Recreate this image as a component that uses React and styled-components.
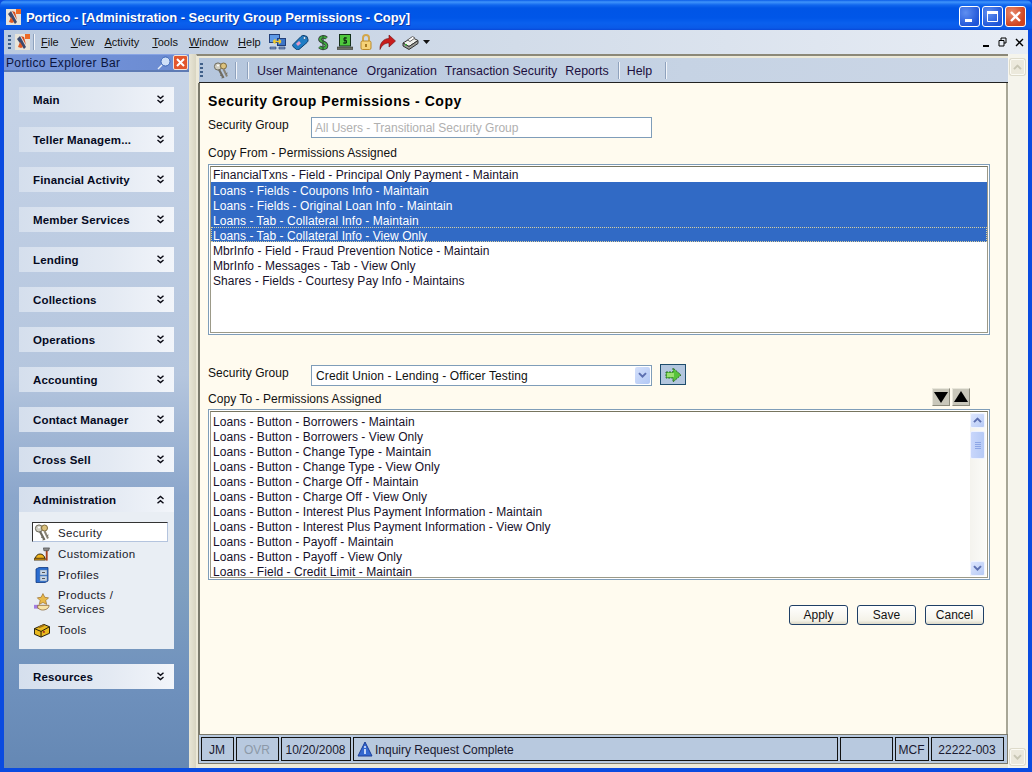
import React from "react";
import styled, { createGlobalStyle } from "styled-components";

const Global = createGlobalStyle`
  html, body { margin: 0; padding: 0; background: #0050e0; }
  * { box-sizing: border-box; }
  body { font-family: "Liberation Sans", Arial, sans-serif; font-size: 12px; color: #111; }
`;

const Win = styled.div`
  width: 1032px; height: 772px; overflow: hidden; display: flex; flex-direction: column;
  background: #0a4be0; padding: 0 4px 4px 4px;
`;
const TitleBar = styled.div`
  height: 30px; margin: 0 -4px; padding: 0 6px 0 6px; display: flex; align-items: center;
  border-radius: 6px 6px 0 0;
  background: linear-gradient(180deg,#0a5ce8 0,#3f94fb 2px,#1167ee 5px,#0055e6 8px,#0056e8 18px,#0a60ee 23px,#0a5ae8 28px,#0848d8 30px);
`;
const Title = styled.div`
  flex: 1; margin-left: 5px; color: #fff; font-weight: bold; font-size: 13px; letter-spacing: -.05px;
  white-space: nowrap; margin-top: 4px; text-shadow: 1px 1px 0 #0a3aa8;
`;
const TitleLogo = styled.div` display: flex; margin-top: 3px; `;
const CapBtn = styled.div`
  width: 21px; height: 21px; margin-left: 2px; margin-top: 2px; border: 1px solid #fff; border-radius: 3px;
  display: flex; align-items: center; justify-content: center;
  background: ${p => p.$close ? "radial-gradient(circle at 30% 30%,#e88a6c,#d0441f 70%)" : "radial-gradient(circle at 30% 30%,#5f8ff0,#1f55d8 75%)"};
`;
const MenuBar = styled.div`
  height: 24px; display: flex; align-items: center; padding-left: 4px;
  background: linear-gradient(90deg,#bccbe0 0,#d2dce9 50%,#e8edf5 100%);
`;
const Grip = styled.div`
  width: 3px; height: ${p => p.$h || 14}px; margin-right: ${p => p.$mr || 4}px;
  background: repeating-linear-gradient(180deg,#3f5f88 0 2px,transparent 2px 4px);
`;
const Sep = styled.div`
  width: 1px; height: ${p => p.$h || 16}px; background: #8fa2bd; box-shadow: 1px 0 0 #f2f5fa; margin: 0 0 0 ${p => p.$l || 0}px;
`;
const MenuItem = styled.span`
  font-size: 11px; margin-left: ${p => p.$ml}px; color: #111; display: inline-block;
  &::first-letter { text-decoration: underline; }
`;
const IconRow = styled.div`
  display: flex; gap: 6px; margin-left: 8px; align-items: center;
`;
const MdiBtns = styled.div`
  margin-left: auto; display: flex; gap: 8px; align-items: center; padding-right: 4px;
`;
const Main = styled.div` flex: 1; display: flex; min-height: 0; `;
const Explorer = styled.div`
  width: 185px; display: flex; flex-direction: column;
  background: linear-gradient(180deg,#c8d5e8 0,#b5c6de 45%,#8ba6cb 62%,#7f9fc0 75%,#6f91bd 88%,#6588b4 100%);
`;
const ExpHead = styled.div`
  height: 18px; display: flex; align-items: center; padding: 0 1px 0 2px; font-size: 12px; color: #0b1540;
  background: linear-gradient(90deg,#7593d8,#6f8fd6 60%,#6b8bd0); border-bottom: 2px solid #5e7bb4; border-top: 1px solid #88a4e4;
`;
const ExpTitle = styled.span` flex: 1; letter-spacing: .35px; `;
const CloseTag = styled.div`
  width: 15px; height: 15px; border: 1px solid #f2e3d6; background: #e2562c; border-radius: 2px;
  display: flex; align-items: center; justify-content: center; margin-left: 2px;
`;
const Groups = styled.div` padding: 15px 15px 0 15px; display: flex; flex-direction: column; gap: 15px; `;
const Group = styled.div` display: flex; flex-direction: column; `;
const GroupHead = styled.div`
  height: 25px; display: flex; align-items: center; justify-content: space-between; padding: 0 10px 0 14px;
  font-weight: bold; font-size: 11.5px; letter-spacing: .15px; color: #050a1e; white-space: nowrap;
  background: linear-gradient(90deg,#d5dfed 0,#e4eaf3 60%,#f2f5fa 100%);
`;
const GroupBody = styled.div`
  height: 137px; background: #e9eef4; padding: 10px 6px 0 13px; display: flex; flex-direction: column;
`;
const ExpItem = styled.div`
  display: flex; align-items: center; gap: 8px; flex: none; height: ${p => p.$h || 21}px; margin-top: ${p => p.$mt || 0}px; padding-left: 2px; line-height: 14px; font-size: 11.5px; letter-spacing: .35px; color: #1a1a2a;
  ${p => p.$active && `background:#fff;border:1px solid;border-color:#333 #b4c4de #b4c4de #333;padding:1px 0 0 1px;margin-bottom:1px;height:20px;`}
`;
const ItemIcon = styled.div` width: 16px; display: flex; justify-content: center; flex: none; `;
const Splitter = styled.div` width: 7px; background: linear-gradient(90deg,#e8e6d6,#d8d5c2); `;
const Right = styled.div`
  flex: 1; display: flex; flex-direction: column; padding: 2px 0 4px 1px; background: #ece9d8;
  border-top: 2px solid #8b8878; border-left: 1px solid #ece9d8; min-width: 0;
`;
const Tool = styled.div`
  height: 25px; display: flex; align-items: center; padding: 1px 0 0 1px; margin-left: 1px; border-bottom: 1px solid #222; flex: none;
  background: linear-gradient(90deg,#b5c6dd,#c6d3e4 60%,#cbd6e6);
`;
const ToolLink = styled.span` margin-left: ${p => p.$ml || 0}px; font-size: 12.4px; padding-top: 1px; color: #1c1040; white-space: nowrap; `;
const Content = styled.div`
  flex: 1; background: #fffbef; border-left: 2px solid #7b7a6c; border-right: 2px solid #a8a696; padding: 0 16px 0 8px; display: flex; flex-direction: column; min-height: 0;
`;
const Heading = styled.div`
  font-weight: bold; font-size: 14px; margin-top: 10px; height: 16px; line-height: 16px; color: #000; letter-spacing: .55px; white-space: nowrap;
`;
const Label = styled.div` height: 14px; line-height: 14px; font-size: 12px; letter-spacing: .05px; color: #111; margin-top: ${p => p.$mt || 0}px; `;
const FieldRow = styled.div`
  display: flex; align-items: flex-start; margin-top: ${p => p.$mt || 0}px;
`;
const FieldLabel = styled(Label)` width: 103px; margin-top: 1px; `;
const TextField = styled.div`
  width: 341px; height: 21px; border: 1px solid #7f9db9; background: #fff; color: #b0b0b0; padding: 3px 3px; font-size: 12px; line-height: 14px; white-space: nowrap;
`;
const SelectField = styled.div`
  width: 341px; height: 21px; border: 1px solid #7f9db9; background: #fff; padding: 3px 4px; font-size: 12px; letter-spacing: .12px; line-height: 14px; position: relative; color: #111;
`;
const SelectArrow = styled.div`
  position: absolute; right: 1px; top: 1px; width: 15px; height: 17px; background: linear-gradient(135deg,#d4e0fb,#b2c8f5); border-radius: 2px; display: flex; align-items: center; justify-content: center;
`;
const ListBox = styled.div`
  height: 171px; border: 1px solid #7f9db9; padding: 1px; background: #fff; position: relative; margin-top: ${p => p.$mt || 0}px; flex: none;
`;
const ListInner = styled.div`
  height: 100%; border: 1px solid #9c9a88; border-top-color: #77755f; padding: ${p => p.$pt || 0}px 0 0 0; overflow: hidden; display: flex; flex-direction: column;
`;
const SelBlock = styled.div` background: #316ac5; display: flex; flex-direction: column; flex: none; `;
const ListRow = styled.div`
  height: 15px; line-height: ${p => p.$tight ? 17 : 19}px; padding-left: 2px; font-size: 12px; letter-spacing: .06px; white-space: nowrap; flex: none;
  color: ${p => p.$sel ? "#fff" : "#16102a"};
  ${p => p.$focus && "outline: 1px dotted #d7cfa0; outline-offset: -1px;"}
`;
const VScroll = styled.div`
  position: absolute; right: 3px; top: 3px; bottom: 3px; width: 16px; background: linear-gradient(90deg,#f4f3ee,#fbfbf8);
  display: flex; flex-direction: column; justify-content: space-between;
`;
const ScrollBtn = styled.div`
  width: 15px; height: 15px; background: linear-gradient(135deg,#dde6fd,#b6caf6); border: 1px solid #f0f4ff; border-radius: 2px; display: flex; align-items: center; justify-content: center;
`;
const Thumb = styled.div`
  position: absolute; left: 0; top: 18px; width: 15px; height: 28px; background: linear-gradient(90deg,#c8d6fb,#b6caf6); border: 1px solid #eef2ff; border-radius: 2px;
  display: flex; flex-direction: column; gap: 1px; align-items: center; justify-content: center;
  & > i { display: block; width: 6px; height: 1px; background: #8da6e6; }
`;
const GoBtn = styled.div`
  width: 26px; height: 21px; margin-left: 8px; margin-top: -1px; background: #b3c6de; border: 1px solid #1f4d6c; display: flex; align-items: center; justify-content: center;
`;
const LabelRow = styled.div` display: flex; justify-content: space-between; align-items: flex-start; padding-right: 20px; height: 21px; margin-top: 2px; `;
const SortBtns = styled.div` display: flex; gap: 2px; `;
const SortBtn = styled.div`
  width: 18px; height: 18px; background: #c9c7ba; border: 1px solid #e8e6da; border-right-color: #8d8b7c; border-bottom-color: #8d8b7c; display: flex; align-items: center; justify-content: center;
`;
const CopyToLabel = styled(Label)` margin-top: 4px; `;
const Actions = styled.div` display: flex; justify-content: flex-end; gap: 9px; padding-right: 6px; margin-top: 25px; `;
const Btn = styled.div`
  width: 59px; height: 20px; border: 1px solid #1f3f66; border-radius: 3px; background: linear-gradient(180deg,#fff,#f4f2e8 80%,#dcd8c6); text-align: center; line-height: 19px; font-size: 12px; color: #111;
`;
const Status = styled.div`
  height: 30px; background: #b8c9df; border: 1px solid #7c7a6c; padding: 2px; display: flex; gap: 2px; align-items: stretch; flex: none;
`;
const Panel = styled.div`
  width: ${p => p.$w}px; border: 1px solid #111; display: flex; align-items: center; justify-content: ${p => p.$left ? "flex-start" : "center"}; gap: 2px; font-size: 12px; padding: 1px 1px 0 ${p => p.$left ? 3 : 0}px; color: ${p => p.$dim ? "#8c99a8" : "#1a1a30"}; white-space: nowrap;
`;
const WinScroll = styled.div`
  width: 20px; background: #f5f4ec; display: flex; flex-direction: column; justify-content: space-between; padding: 5px 4px 3px 1px; border-left: 1px solid #f8f7f0;
`;
const WinScrollBtn = styled.div`
  width: 15px; height: 16px; background: #ece9dc; border: 1px solid #fbfaf3; box-shadow: 0 0 0 1px #dedbcb; border-radius: 2px; display: flex; align-items: center; justify-content: center;
`;

const Chev = ({ up }) => (
  <svg width="7" height="9" viewBox="0 0 7 9" fill="none" stroke="#0a0a14" strokeWidth="1.4" style={up ? { transform: "scaleY(-1)" } : undefined}>
    <path d="M.5 .8l3 2.6 3-2.6M.5 5l3 2.600 3-2.600" />
  </svg>
);
const Caret = ({ up, color = "#5c6fb0", s = 9 }) => (
  <svg width={s} height={s * 0.7} viewBox="0 0 9 6" fill="none" stroke={color} strokeWidth="2" style={up ? { transform: "scaleY(-1)" } : undefined}>
    <path d="M1 1l3.500 3.500L8 1" />
  </svg>
);
const Keys = () => (
  <svg width="16" height="17" viewBox="0 0 16 17">
    <circle cx="5" cy="4.500" r="3.600" fill="#cfcdc0" stroke="#6d6a5c" />
    <circle cx="10.500" cy="4" r="3" fill="#dcc27e" stroke="#7d6a3c" />
    <circle cx="5" cy="3.500" r="1" fill="#fff" />
    <path d="M6 7.500l4.500 8.500" stroke="#6f6c62" strokeWidth="2.200" />
    <path d="M10.500 7l3.500 7.500" stroke="#8a8476" strokeWidth="2" />
    <path d="M9 12.500l-2 1M10.500 15l-2 1M13 12l1.500-1" stroke="#6f6c62" />
  </svg>
);
const AppLogo = () => (
  <svg width="15" height="16" viewBox="0 0 15 16">
    <rect width="15" height="16" fill="#e8e4da" />
    <rect x="10" width="5" height="5" fill="#ec6a26" />
    <path d="M2 5l3-3 6 11-2 2z" fill="#3c4a6e" />
    <path d="M3 13l2-5 3 5-2 1z" fill="#e05a24" />
    <path d="M6 2l3 1 2 8z" fill="#d84c1e" />
  </svg>
);
const MonitorIcon = () => (
  <svg width="17" height="16" viewBox="0 0 17 16">
    <rect x=".5" y=".5" width="10" height="8" fill="#5f9ae6" stroke="#23407a" />
    <rect x="8.500" y="4.500" width="8" height="7" fill="#3e76c8" stroke="#23407a" />
    <path d="M1 13h6v2H1zM10 13h6v2h-6z" fill="#7e93bb" stroke="#23407a" strokeWidth=".6" />
    <path d="M4 7.500h8M4 7.500l2.500-2M4 7.500l2.500 2M12 7.500l-2-2M12 7.500l-2 2" stroke="#f2c92c" strokeWidth="1.500" fill="none" />
  </svg>
);
const TagIcon = () => (
  <svg width="17" height="16" viewBox="0 0 17 16">
    <path d="M1 10.500L9 2.500a3 3 0 013-1l3 1 1 3a3 3 0 01-1 3L7 15.500a2 2 0 01-2.500 0l-3.500-3a1.500 1.500 0 010-2z" fill="#1f7cc4" stroke="#0d3f70" />
    <circle cx="12.500" cy="4" r="1.300" fill="#eaf4ff" stroke="#0d3f70" strokeWidth=".5" />
    <rect x="4.500" y="8" width="4" height="3" fill="#e29ac4" transform="rotate(-40 6.500 9.500)" />
  </svg>
);
const DollarIcon = () => (
  <svg width="16" height="17" viewBox="0 0 16 17">
    <path d="M11.500 4.200C9.500 2 5 2.800 5 5.500S11.500 8 11.500 11.500 6.500 15 4.500 12.800" fill="none" stroke="#36383a" strokeWidth="3.600" />
    <path d="M11.500 4.200C9.500 2 5 2.800 5 5.500S11.500 8 11.500 11.500 6.500 15 4.500 12.800" fill="none" stroke="#3fae3f" strokeWidth="2" />
    <path d="M8 1v15" stroke="#2c5a30" strokeWidth="1.300" />
  </svg>
);
const ScreenIcon = () => (
  <svg width="16" height="16" viewBox="0 0 16 16">
    <rect x="2.500" y=".5" width="11" height="11.500" fill="#4fc83e" stroke="#14301a" />
    <rect x="0" y="13" width="16" height="2.500" fill="#6a6e62" stroke="#222" strokeWidth=".5" />
    <path d="M10 4H7v2.500h2.500V9H6M8 3v7" stroke="#0e2a14" fill="none" />
  </svg>
);
const LockIcon = () => (
  <svg width="14" height="16" viewBox="0 0 14 16">
    <path d="M4 8V4a3 3 0 016 0v4" fill="none" stroke="#d2a64a" strokeWidth="2" />
    <rect x="2" y="7" width="10" height="8.500" rx="1.500" fill="#f5d277" stroke="#bb8a2a" />
    <rect x="6" y="10" width="2" height="3" fill="#a67a22" />
  </svg>
);
const RedArrow = () => (
  <svg width="17" height="16" viewBox="0 0 17 16"><path d="M1 15.500C.5 8.500 5 4.500 10 4.500V1l6.500 6-6.500 6V9C6 9 3 11 1 15.500z" fill="#c81c1c" stroke="#6d0f0f" strokeWidth=".6" /></svg>
);
const Printer = () => (
  <svg width="17" height="15" viewBox="0 0 17 15">
    <path d="M1 8l9-5.500 6 3-9 6z" fill="#f2f2ee" stroke="#333" />
    <path d="M1 8v3l6 3.500 9-6V5.500l-9 6z" fill="#9a9a94" stroke="#333" />
    <path d="M5.500 5l5-3.500L13 3 8 6.500z" fill="#fff" stroke="#666" />
    <rect x="3" y="9" width="2" height="1.500" fill="#3a3" />
  </svg>
);
const SmallCaret = () => <svg width="7" height="4" viewBox="0 0 7 4" style={{ marginLeft: -2 }}><path d="M0 0h7L3.500 4z" fill="#111" /></svg>;
const Helmet = () => (
  <svg width="17" height="16" viewBox="0 0 17 16">
    <path d="M1.500 13a5 5 0 0110 0z" fill="#f0b41c" stroke="#2e2208" />
    <path d="M0 12.500h12v2H0z" fill="#d89818" stroke="#2e2208" strokeWidth=".7" />
    <path d="M13.500 4v11" stroke="#a8421c" strokeWidth="2" />
    <path d="M10 1.500h6.500l-1 3h-5z" fill="#8a8a8a" stroke="#333" strokeWidth=".6" />
  </svg>
);
const Cabinet = () => (
  <svg width="14" height="16" viewBox="0 0 14 16">
    <path d="M1 2l3-1.500h9V14l-3 1.500H1z" fill="#2a6cd0" stroke="#123a80" strokeWidth=".8" />
    <rect x="5" y="3" width="7" height="5" fill="#c6d6e8" stroke="#6a86a8" strokeWidth=".5" />
    <rect x="5" y="9" width="7" height="5" fill="#c6d6e8" stroke="#6a86a8" strokeWidth=".5" />
    <rect x="7" y="5" width="3" height="1" fill="#555" /><rect x="7" y="11" width="3" height="1" fill="#555" />
  </svg>
);
const StarHand = () => (
  <svg width="17" height="19" viewBox="0 0 17 19">
    <path d="M9.500 0l2 4 4 .5-3 3 1 4-4-2-4 2 1-4-3-3 4-.5z" fill="#e8ba4c" stroke="#8a5a18" strokeWidth=".6" />
    <rect x="0" y="12" width="5" height="4" fill="#a27ce0" />
    <path d="M4 12.500h12c0 3-3 5-7 5-2 0-3-1-5-2z" fill="#f8e4a8" stroke="#7a5016" strokeWidth=".7" />
  </svg>
);
const ToolBox = () => (
  <svg width="17" height="15" viewBox="0 0 17 15">
    <path d="M.5 5.500l10-4.500 6 2.500v7l-9 4-7-3z" fill="#e9b91e" stroke="#1c1606" />
    <path d="M.5 5.500l7 3 9-5M7.500 8.500v6" stroke="#1c1606" fill="none" />
    <rect x="5" y="2" width="6" height="2" fill="#9c6c14" transform="rotate(-22 8 3)" />
    <rect x="9.500" y="8" width="2" height="2" fill="#b0381c" />
  </svg>
);
const GreenArrow = () => (
  <svg width="17" height="14" viewBox="0 0 17 14"><path d="M1 4h7V0l8 7-8 7v-4H1z" fill="#57c23a" stroke="#2d6a28" strokeDasharray="2 1" /><rect x="2" y="5" width="7" height="4" fill="#9be070" /></svg>
);
const Tri = ({ up }) => <svg width="14" height="12" viewBox="0 0 14 12" style={up ? undefined : { transform: "scaleY(-1)" }}><path d="M7 0l7 11H0z" fill="#000" /></svg>;
const Info = () => (
  <svg width="16" height="17" viewBox="0 0 16 17"><path d="M8 1l7 14H1z" fill="#3468d0" stroke="#1c3e98" /><circle cx="8" cy="6" r="1" fill="#e8f0ff" /><path d="M8 8v5" stroke="#e8f0ff" strokeWidth="1.600" /></svg>
);

const groupsTop = ["Main", "Teller Managem...", "Financial Activity", "Member Services", "Lending", "Collections", "Operations", "Accounting", "Contact Manager", "Cross Sell"];
const selectedRows = [
  "Loans - Fields - Coupons Info - Maintain",
  "Loans - Fields - Original Loan Info - Maintain",
  "Loans - Tab - Collateral Info - Maintain",
  "Loans - Tab - Collateral Info - View Only",
];
const afterRows = [
  "MbrInfo - Field - Fraud Prevention Notice - Maintain",
  "MbrInfo - Messages - Tab - View Only",
  "Shares - Fields - Courtesy Pay Info - Maintains",
];
const toRows = [
  "Loans - Button - Borrowers - Maintain",
  "Loans - Button - Borrowers - View Only",
  "Loans - Button - Change Type - Maintain",
  "Loans - Button - Change Type - View Only",
  "Loans - Button - Charge Off - Maintain",
  "Loans - Button - Charge Off - View Only",
  "Loans - Button - Interest Plus Payment Information - Maintain",
  "Loans - Button - Interest Plus Payment Information - View Only",
  "Loans - Button - Payoff - Maintain",
  "Loans - Button - Payoff - View Only",
  "Loans - Field - Credit Limit - Maintain",
];

export default function App() {
  return (
    <Win>
      <Global />
      <TitleBar>
        <TitleLogo><AppLogo /></TitleLogo>
        <Title>Portico - [Administration - Security Group Permissions - Copy]</Title>
        <CapBtn><svg width="13" height="13" viewBox="0 0 13 13"><rect x="2" y="9" width="7" height="3" fill="#fff" /></svg></CapBtn>
        <CapBtn><svg width="13" height="13" viewBox="0 0 13 13"><path d="M1.500 3.500h10v8h-10z" fill="none" stroke="#fff" /><rect x="1" y="1" width="11" height="3" fill="#fff" /></svg></CapBtn>
        <CapBtn $close><svg width="13" height="13" viewBox="0 0 13 13"><path d="M2 2l9 9M11 2l-9 9" stroke="#fff" strokeWidth="2.400" /></svg></CapBtn>
      </TitleBar>
      <MenuBar>
        <Grip />
        <AppLogo />
        <Sep $l={3} />
        <MenuItem $ml={7}>File</MenuItem>
        <MenuItem $ml={12}>View</MenuItem>
        <MenuItem $ml={10}>Activity</MenuItem>
        <MenuItem $ml={13}>Tools</MenuItem>
        <MenuItem $ml={11}>Window</MenuItem>
        <MenuItem $ml={10}>Help</MenuItem>
        <IconRow>
          <MonitorIcon /><TagIcon /><DollarIcon /><ScreenIcon /><LockIcon /><RedArrow /><Printer /><SmallCaret />
        </IconRow>
        <MdiBtns>
          <svg width="7" height="12" viewBox="0 0 7 12"><rect y="9" width="6" height="2" fill="#000" /></svg>
          <svg width="9" height="10" viewBox="0 0 9 10" fill="none" stroke="#000"><path d="M3 3V1h5v5H6M1 3.500h5v5.500H1z" /></svg>
          <svg width="9" height="9" viewBox="0 0 9 9"><path d="M1 1l7 7M8 1l-7 7" stroke="#000" strokeWidth="1.400" /></svg>
        </MdiBtns>
      </MenuBar>
      <Main>
        <Explorer>
          <ExpHead>
            <ExpTitle>Portico Explorer Bar</ExpTitle>
            <svg width="14" height="14" viewBox="0 0 14 14"><circle cx="8.500" cy="5.500" r="4.500" fill="#cfe0f8" stroke="#3a66b8" /><path d="M5 9l-4 4" stroke="#e8eef8" strokeWidth="1.400" /></svg>
            <CloseTag><svg width="9" height="9" viewBox="0 0 9 9"><path d="M1 1l7 7M8 1l-7 7" stroke="#fff" strokeWidth="2" /></svg></CloseTag>
          </ExpHead>
          <Groups>
            {groupsTop.map(g => (
              <GroupHead key={g}>{g}<Chev /></GroupHead>
            ))}
            <Group>
              <GroupHead>Administration<Chev up /></GroupHead>
              <GroupBody>
                <ExpItem $active><ItemIcon><Keys /></ItemIcon>Security</ExpItem>
                <ExpItem><ItemIcon><Helmet /></ItemIcon>Customization</ExpItem>
                <ExpItem><ItemIcon><Cabinet /></ItemIcon>Profiles</ExpItem>
                <ExpItem $h={28} $mt={3}><ItemIcon><StarHand /></ItemIcon><span>Products /<br />Services</span></ExpItem>
                <ExpItem $h={14} $mt={7}><ItemIcon><ToolBox /></ItemIcon>Tools</ExpItem>
              </GroupBody>
            </Group>
            <GroupHead>Resources<Chev /></GroupHead>
          </Groups>
        </Explorer>
        <Splitter />
        <Right>
          <Tool>
            <Grip $h={16} $mr={10} />
            <Keys />
            <Sep $h={17} $l={6} />
            <Sep $h={17} $l={11} />
            <ToolLink $ml={9}>User Maintenance</ToolLink>
            <ToolLink $ml={9}>Organization</ToolLink>
            <ToolLink $ml={8}>Transaction Security</ToolLink>
            <ToolLink $ml={8}>Reports</ToolLink>
            <Sep $h={17} $l={9} />
            <ToolLink $ml={8}>Help</ToolLink>
            <Sep $h={17} $l={13} />
          </Tool>
          <Content>
            <Heading>Security Group Permissions - Copy</Heading>
            <FieldRow $mt={8}>
              <FieldLabel>Security Group</FieldLabel>
              <TextField>All Users - Transitional Security Group</TextField>
            </FieldRow>
            <Label $mt={8}>Copy From - Permissions Assigned</Label>
            <ListBox $mt={4}>
              <ListInner>
                <ListRow $tight>FinancialTxns - Field - Principal Only Payment - Maintain</ListRow>
                <SelBlock>
                  {selectedRows.map((t, i) => <ListRow key={t} $sel $focus={i === selectedRows.length - 1}>{t}</ListRow>)}
                </SelBlock>
                {afterRows.map(t => <ListRow key={t}>{t}</ListRow>)}
              </ListInner>
            </ListBox>
            <FieldRow $mt={30}>
              <FieldLabel>Security Group</FieldLabel>
              <SelectField>Credit Union - Lending - Officer Testing<SelectArrow><Caret /></SelectArrow></SelectField>
              <GoBtn><GreenArrow /></GoBtn>
            </FieldRow>
            <LabelRow>
              <CopyToLabel>Copy To - Permissions Assigned</CopyToLabel>
              <SortBtns><SortBtn><Tri /></SortBtn><SortBtn><Tri up /></SortBtn></SortBtns>
            </LabelRow>
            <ListBox>
              <ListInner $pt={1}>
                {toRows.map(t => <ListRow key={t}>{t}</ListRow>)}
              </ListInner>
              <VScroll>
                <ScrollBtn><Caret up /></ScrollBtn>
                <Thumb><i /><i /><i /><i /></Thumb>
                <ScrollBtn><Caret /></ScrollBtn>
              </VScroll>
            </ListBox>
            <Actions><Btn>Apply</Btn><Btn>Save</Btn><Btn>Cancel</Btn></Actions>
          </Content>
          <Status>
            <Panel $w={33}>JM</Panel>
            <Panel $w={43} $dim>OVR</Panel>
            <Panel $w={70}>10/20/2008</Panel>
            <Panel $w={485} $left><Info />Inquiry Request Complete</Panel>
            <Panel $w={53} />
            <Panel $w={34}>MCF</Panel>
            <Panel $w={73}>22222-003</Panel>
          </Status>
        </Right>
        <WinScroll>
          <WinScrollBtn><Caret up color="#c8c6b4" /></WinScrollBtn>
          <WinScrollBtn><Caret color="#c8c6b4" /></WinScrollBtn>
        </WinScroll>
      </Main>
    </Win>
  );
}
